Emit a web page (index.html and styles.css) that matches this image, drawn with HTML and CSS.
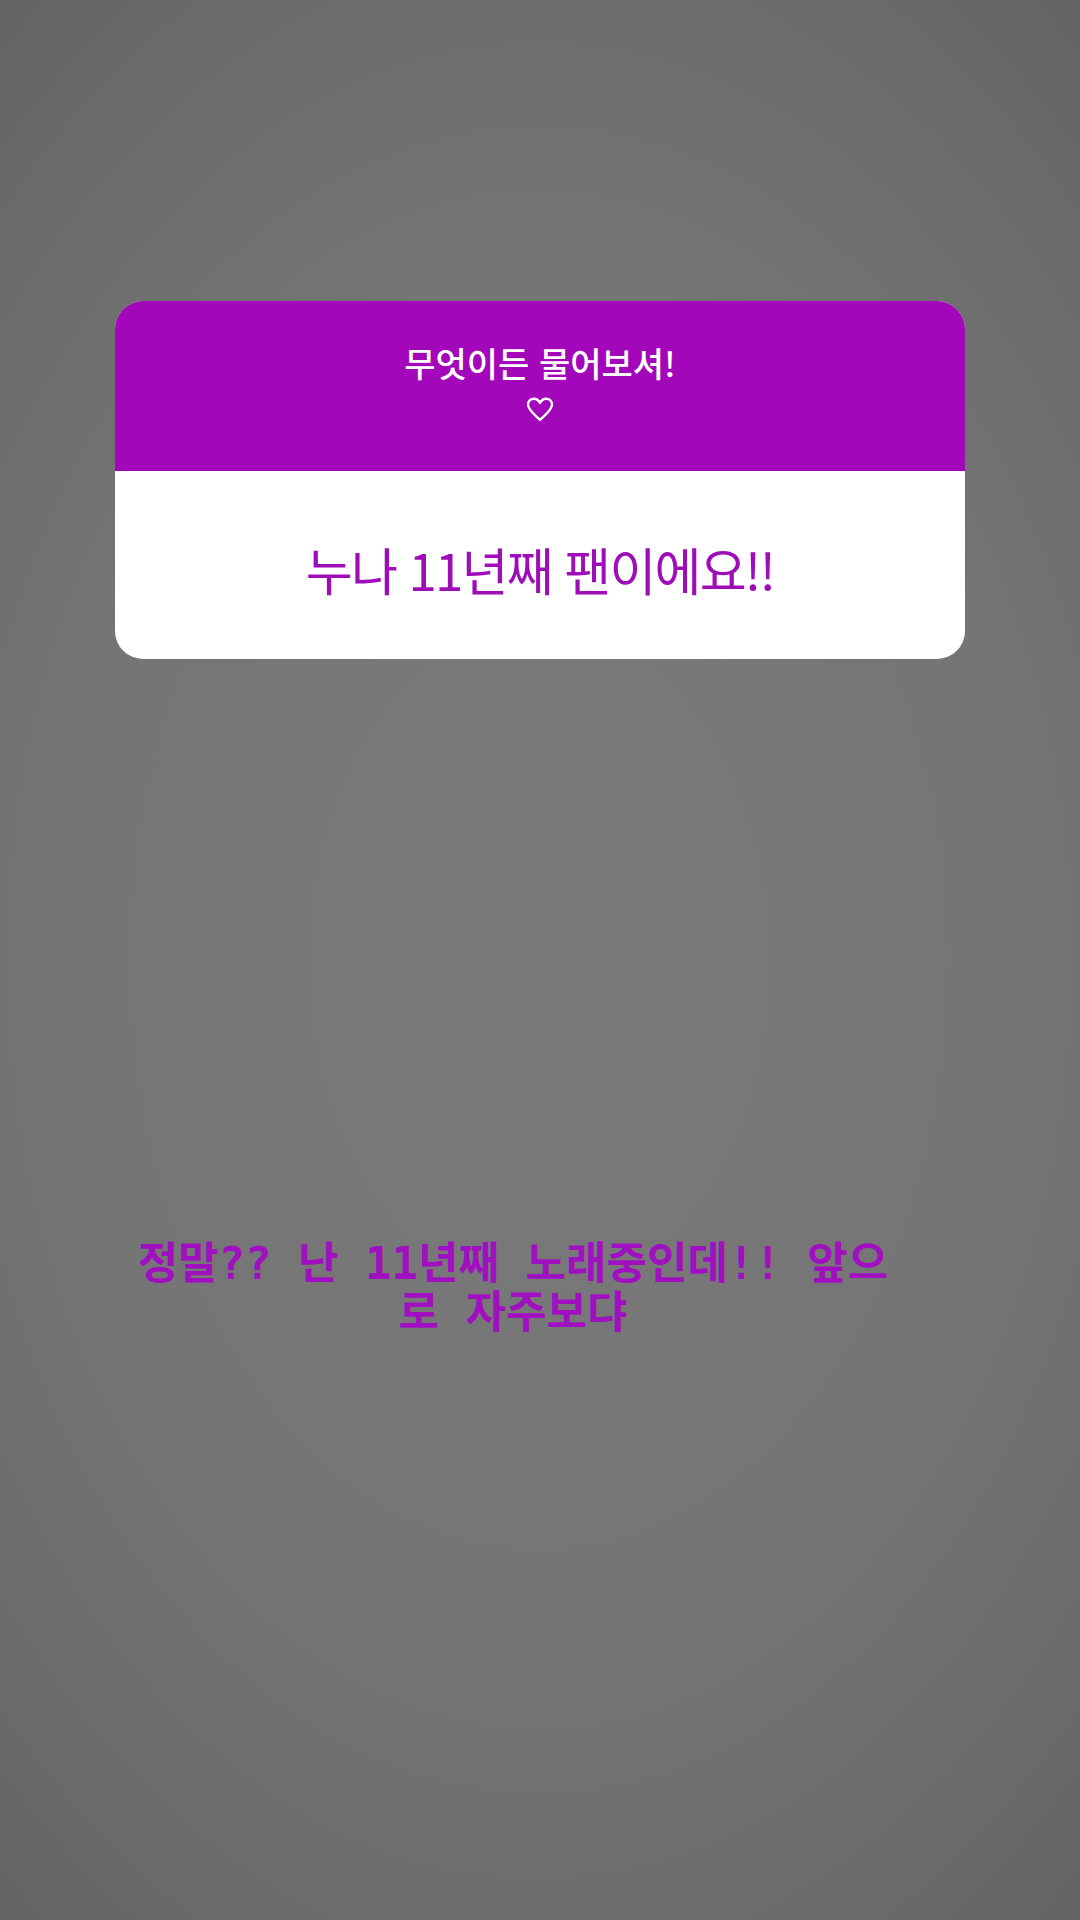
FILE: index.html
```html
<!DOCTYPE html>
<html lang="ko">
<head>
<meta charset="utf-8">
<link rel="stylesheet" href="styles.css">
</head>
<body>
<div class="story">
  <div class="card">
    <div class="card-head">
      <div class="prompt">무엇이든 물어보셔!</div>
      <svg class="heart" width="28" height="25" viewBox="0 0 28 25"><path d="M14 23 C 9 18, 2 13, 2 7.5 C 2 4, 4.5 1.8, 7.8 1.8 C 10.5 1.8, 12.8 3.5, 14 6 C 15.2 3.5, 17.5 1.8, 20.2 1.8 C 23.5 1.8, 26 4, 26 7.5 C 26 13, 19 18, 14 23 Z" fill="none" stroke="#ffffff" stroke-width="2.4" stroke-linejoin="round"/></svg>
    </div>
    <div class="card-body">
      <div class="answer">누나 11년째 팬이에요!!</div>
    </div>
  </div>
  <div class="reply">정말?? 난 11년째 노래중인데!! 앞으로 자주보댜</div>
</div>
</body>
</html>
```
FILE: styles.css
```css
html, body {
  margin: 0;
  padding: 0;
}
body {
  width: 1080px;
  height: 1920px;
  overflow: hidden;
  background: radial-gradient(ellipse 80% 65% at 50% 50%, #7a7a7a 0%, #757575 55%, #6a6a6a 85%, #626262 100%);
  font-family: "Noto Sans CJK KR", "Noto Sans", sans-serif;
}
.story {
  display: flex;
  flex-direction: column;
  align-items: flex-start;
  padding-top: 301px;
  padding-left: 115px;
}
.card {
  width: 850px;
  border-radius: 28px;
  overflow: hidden;
  background: #ffffff;
}
.card-head {
  height: 170px;
  box-sizing: border-box;
  background: #a207b9;
  display: flex;
  flex-direction: column;
  align-items: center;
  padding-top: 40px;
}
.prompt {
  color: #ffffff;
  font-size: 34px;
  line-height: 44px;
  font-weight: 500;
}
.heart {
  display: block;
  margin-top: 12px;
}
.card-body {
  height: 188px;
  display: flex;
  align-items: center;
  justify-content: center;
  padding-top: 8px;
  box-sizing: border-box;
}
.answer {
  color: #9e0db7;
  font-size: 51px;
  line-height: 60px;
  font-weight: 400;
  letter-spacing: -1.8px;
}
.reply {
  margin-top: 580px;
  margin-left: 13px;
  width: 770px;
  text-align: center;
  color: #a010c0;
  font-family: "DejaVu Sans Mono", "Noto Sans CJK KR", monospace;
  font-weight: 700;
  font-size: 44px;
  line-height: 49px;
}
```
